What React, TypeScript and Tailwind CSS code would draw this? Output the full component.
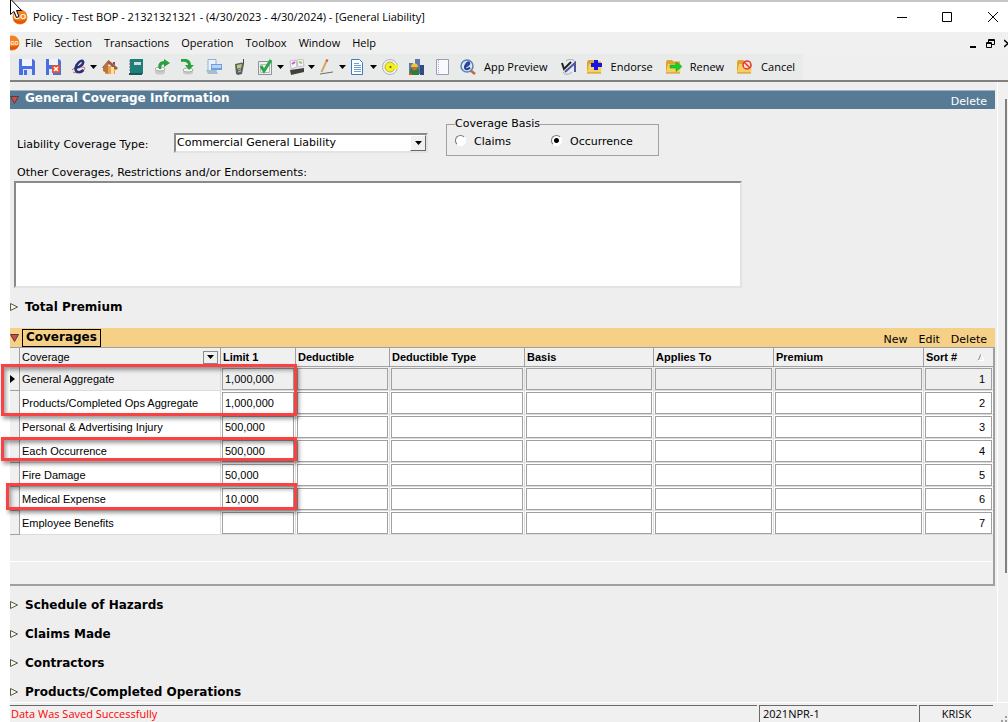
import React, { useState } from "react";

const menuItems = [
  "File",
  "Section",
  "Transactions",
  "Operation",
  "Toolbox",
  "Window",
  "Help",
];

const columns = [
  "Deductible",
  "Deductible Type",
  "Basis",
  "Applies To",
  "Premium",
];

const coverages = [
  { name: "General Aggregate", limit: "1,000,000" },
  { name: "Products/Completed Ops Aggregate", limit: "1,000,000" },
  { name: "Personal & Advertising Injury", limit: "500,000" },
  { name: "Each Occurrence", limit: "500,000" },
  { name: "Fire Damage", limit: "50,000" },
  { name: "Medical Expense", limit: "10,000" },
  { name: "Employee Benefits", limit: "" },
];

const Icon = ({ children }: { children: React.ReactNode }) => (
  <svg
    width="16"
    height="16"
    viewBox="0 0 16 16"
    fill="none"
    className="shrink-0"
    aria-hidden="true"
  >
    {children}
  </svg>
);

const DownArrow = () => (
  <svg width="7" height="4" viewBox="0 0 7 4" aria-hidden="true">
    <path d="M0 0h7L3.500 4z" fill="#000" />
  </svg>
);

const GoLogo = ({ narrow }: { narrow?: boolean }) => (
  <svg
    width={narrow ? 10 : 16}
    height="16"
    viewBox={narrow ? "6 0 10 16" : "0 0 16 16"}
    className="shrink-0"
    aria-hidden="true"
  >
    <circle cx="8" cy="8" r="7.500" fill="#f5821f" />
    <path d="M1 10a7.500 7.500 0 0 0 14 0c-4 2-10 2-14 0z" fill="#e2560b" />
    <text
      x={narrow ? 10.5 : 8}
      y="10"
      fontSize={narrow ? 5 : 8}
      fontWeight="bold"
      textAnchor="middle"
      fill="#fff"
      fontFamily="Liberation Sans, sans-serif"
    >
      GO
    </text>
  </svg>
);

const Folder = () => (
  <>
    <path d="M0 3 1 1h5l1.500 1.500H14V13H0z" fill="#dfa32f" />
    <path d="M2 5h13l-1 9H0z" fill="#f8cf63" />
    <path d="M0 14h14" stroke="#c98f1e" />
  </>
);

const icons = {
  save: (
    <>
      <path d="M0 0h14l2 2v14H0z" fill="#4a6fe0" />
      <path d="M3 0h10v7H3z" fill="#eef3ff" />
      <path d="M4 10h9v6H4z" fill="#dfe6f7" />
      <path d="M5 11h3v5H5z" fill="#4a6fe0" />
    </>
  ),
  saveClose: (
    <>
      <path d="M1 0h13l2 2v14H1z" fill="#4a6fe0" />
      <path d="M4 0h9v6H4z" fill="#eef3ff" />
      <path d="M4 10h4v6H4z" fill="#dfe6f7" />
      <path d="M7 6h8v8H7z" fill="#e0542f" />
      <path d="m9 8 4 4m0-4-4 4" stroke="#fff" strokeWidth="1.500" />
    </>
  ),
  script: (
    <>
      <path d="M1 11c2-3 12-4 13-2-1 4-9 6-12 4" stroke="#e05a5a" />
      <path
        d="M4 8.500c4 1 9-3.500 8-6C10.500-.500 4 6 4.500 10c.500 4 5 4 8 1"
        stroke="#28307c"
        strokeWidth="2.500"
      />
    </>
  ),
  home: (
    <>
      <path d="M3 7h10v8H3z" fill="#e8a25a" />
      <path d="M0 8.500 6.500 1l9.500 8-2 2-7-6-4 5z" fill="#9a5a46" />
      <path d="M1 8 6 2v13l-5-3z" fill="#b8743f" />
      <path d="M9 8h3v7H9z" fill="#ffe08a" />
      <path d="M11 3h2v3l-2-1z" fill="#7d5148" />
    </>
  ),
  book: (
    <>
      <path d="M2 0h13v15H2z" fill="#1f7f78" />
      <path d="M1 14h13v2H1z" fill="#165b57" />
      <path d="M6 3h7v3H6z" fill="#c9e2df" />
      <path d="M1 2h2M1 5h2M1 8h2M1 11h2" stroke="#5b6e6c" />
    </>
  ),
  checkOut: (
    <>
      <path d="M1 10h10v4c-2 2-8 2-10 0z" fill="#c9cbcb" />
      <ellipse cx="6" cy="10" rx="5" ry="2" fill="#f8f8f8" stroke="#a8a8a8" />
      <path
        d="M5 10C3 5 6 2 10 2V0l6 4-6 4V5.500C7 5 7 8 7.500 10z"
        fill="#2aa23c"
      />
    </>
  ),
  checkIn: (
    <>
      <path d="M3 11h10v3c-2 2-8 2-10 0z" fill="#c9cbcb" />
      <ellipse cx="8" cy="11" rx="5" ry="2" fill="#f8f8f8" stroke="#a8a8a8" />
      <path d="M1 0c6-1 10 1 10 6h3l-5 5-4-5h3C8 4 6 2 1 3z" fill="#2aa23c" />
    </>
  ),
  print: (
    <>
      <path d="M2 .500h8v12H2z" fill="#eaf3fb" stroke="#8fb3d6" />
      <path d="M5 5h11v6H5z" fill="#6c9fe0" />
      <path d="M6 6h9v3H6z" fill="#b9d4f5" />
      <path d="M0 11h10l2 4H2z" fill="#a8bccf" />
    </>
  ),
  phone: (
    <>
      <path d="M11 0h1v5h-1z" fill="#444" />
      <path d="m3 5 7-1.500 2 1.500-2 10-4 1-2-1z" fill="#5c625f" />
      <path d="m5 6 5-1-1 4-4 .500z" fill="#b7cf7d" />
      <path d="m6 11 3-1m-3 3 3-1" stroke="#b3b9b6" />
    </>
  ),
  check: (
    <>
      <path d="M.500 2.500h13v13H.500z" fill="#f0f0f0" stroke="#8d9494" />
      <path d="M2.500 5.500h9v8h-9z" stroke="#b4baba" />
      <path d="m3 7 3 5 7-11" stroke="#28a745" strokeWidth="3" />
    </>
  ),
  stamp: (
    <>
      <path d="m1 2 6-1 1 7-6 2z" fill="#f8f3f8" stroke="#c2bcc6" />
      <path d="m8 1 6-1 1 7-6 1z" fill="#f8f3f8" stroke="#c2bcc6" />
      <path d="m3 5 3-2" stroke="#c65bc8" strokeWidth="2" />
      <path d="m10 3 3 1" stroke="#92cf55" strokeWidth="2" />
      <path d="m1 11 14-2v4L2 16z" fill="#40403e" />
    </>
  ),
  pencil: (
    <>
      <path d="M7 1 1.500 13" stroke="#d9a860" strokeWidth="2" />
      <path d="m6 1 2 1" stroke="#cf5a4a" strokeWidth="2" />
      <path d="m0 15 13-2" stroke="#6c6c6c" />
    </>
  ),
  document: (
    <>
      <path d="M.500.500h8l3 3v12H.500z" fill="#fff" stroke="#3d7cc4" />
      <path d="M3 4.500h5M3 6.500h7M3 8.500h7M3 10.500h7M3 12.500h7" stroke="#6a9fd8" />
    </>
  ),
  target: (
    <>
      <circle cx="8" cy="8" r="7.500" fill="#f4f4f4" stroke="#b0b0b0" />
      <circle cx="8" cy="8" r="5" fill="#f4ef1d" stroke="#b5b04a" />
      <path d="M8 6h8v4H8z" fill="#f4ef1d" />
      <circle cx="8.500" cy="8" r="1" fill="#55552a" />
    </>
  ),
  worker: (
    <>
      <path d="M7 0h5v15H7zM1 4h4v10H1z" fill="#6078a8" />
      <path d="M12 6h4v10h-4z" fill="#324b80" />
      <path d="M2 11c1-3 8-3 9 0v5H2z" fill="#2f7d3c" />
      <circle cx="6.500" cy="9" r="2.500" fill="#b9743c" />
      <path d="M3 8c0-5 7-5 7 0z" fill="#f3c52c" />
      <path d="M1 14h3v2H1z" fill="#d4502f" />
    </>
  ),
  notebook: (
    <>
      <path d="M2.500.500h12v15h-12z" fill="#fafafe" stroke="#9a9db8" />
      <path d="M4.500 1v14" stroke="#a4a9dc" strokeDasharray="1 1" />
    </>
  ),
  preview: (
    <>
      <path d="m10 11 5 4" stroke="#c8633a" strokeWidth="2.500" />
      <circle cx="7" cy="7" r="6" fill="#dce9f7" stroke="#5a83b5" strokeWidth="1.500" />
      <path
        d="M4 8c3 0 6-3 5-4.500C7.500 2.500 5 6 5 8.500s3 2 5 0"
        stroke="#2a3f96"
        strokeWidth="2"
      />
    </>
  ),
  compare: (
    <>
      <path d="M5 2c3-3 9-2 9 2M2 13c1 3 6 3 9 0" stroke="#a0a4b8" />
      <path d="m1 4 2 6 7-7" stroke="#222" strokeWidth="2" />
      <path d="m4 13 10-9v9" stroke="#4c55a4" strokeWidth="2" />
    </>
  ),
  endorse: (
    <>
      <Folder />
      <path d="M7 1h4v3h4v4h-4v3H7V8H4V4h3z" fill="#1414e6" />
    </>
  ),
  renew: (
    <>
      <Folder />
      <path d="M4 6h6V3l6 4.500-6 5V9H4z" fill="#12d422" stroke="#1a8c22" strokeWidth=".5" />
    </>
  ),
  cancel: (
    <>
      <Folder />
      <circle cx="10" cy="6" r="4" fill="#fbe3d4" stroke="#e8352b" strokeWidth="1.500" />
      <path d="m7 3 6 6" stroke="#e8352b" strokeWidth="1.500" />
    </>
  ),
};

type Tool = {
  icon: keyof typeof icons;
  label: string;
  menu?: boolean;
  text?: boolean;
};

const tools: Tool[] = [
  { icon: "save", label: "Save" },
  { icon: "saveClose", label: "Save and close" },
  { icon: "script", label: "Forms", menu: true },
  { icon: "home", label: "Home" },
  { icon: "book", label: "Address book" },
  { icon: "checkOut", label: "Check out" },
  { icon: "checkIn", label: "Check in" },
  { icon: "print", label: "Print" },
  { icon: "phone", label: "Phone" },
  { icon: "check", label: "Tasks", menu: true },
  { icon: "stamp", label: "Cards", menu: true },
  { icon: "pencil", label: "Notes", menu: true },
  { icon: "document", label: "Documents", menu: true },
  { icon: "target", label: "Locate" },
  { icon: "worker", label: "Contractors" },
  { icon: "notebook", label: "Notebook" },
  { icon: "preview", label: "App Preview", text: true },
  { icon: "compare", label: "Compare" },
  { icon: "endorse", label: "Endorse", text: true },
  { icon: "renew", label: "Renew", text: true },
  { icon: "cancel", label: "Cancel", text: true },
];

const ToolButton = ({ tool }: { tool: Tool }) => (
  <button
    type="button"
    aria-label={tool.label}
    className={`flex h-full shrink-0 items-center pl-[5px] hover:bg-white ${
      tool.text ? "gap-2 pr-2" : tool.menu ? "gap-[3px]" : "pr-[5px]"
    }`}
  >
    <Icon>{icons[tool.icon]}</Icon>
    {tool.text && <span>{tool.label}</span>}
    {tool.menu && <DownArrow />}
  </button>
);

const TitleBar = () => (
  <header className="flex h-8 items-center border-t-2 border-[#c6c6ca] bg-white pl-0.5">
    <GoLogo />
    <h1 className="ml-[5px] flex-1 truncate">
      Policy - Test BOP - 21321321321 - (4/30/2023 - 4/30/2024) - [General
      Liability]
    </h1>
    <div className="flex h-full">
      <button type="button" aria-label="Minimize" className="w-[46px] pl-[18px]">
        <svg width="10" height="10" viewBox="0 0 10 10" stroke="#000">
          <path d="M0 5.500h10" />
        </svg>
      </button>
      <button type="button" aria-label="Maximize" className="w-[46px] pl-[17px]">
        <svg width="10" height="10" viewBox="0 0 10 10" fill="none" stroke="#000">
          <path d="M.500.500h9v9h-9z" />
        </svg>
      </button>
      <button type="button" aria-label="Close" className="w-[37px] pl-[17px]">
        <svg width="10" height="10" viewBox="0 0 10 10" stroke="#000">
          <path d="m0 0 10 10M10 0 0 10" />
        </svg>
      </button>
    </div>
  </header>
);

const MenuBar = () => (
  <nav className="flex h-[22px] items-center bg-[#f0f0f0]">
    <GoLogo narrow />
    <div className="flex flex-1 gap-3 pl-[5px]">
      {menuItems.map((item) => (
        <button key={item} type="button" className="hover:underline">
          {item}
        </button>
      ))}
    </div>
    <div className="flex gap-[9px]">
      <button type="button" aria-label="Minimize form">
        <svg width="7" height="9" viewBox="0 0 7 9">
          <path d="M0 7h6v2H0z" />
        </svg>
      </button>
      <button type="button" aria-label="Restore form">
        <svg width="9" height="9" viewBox="0 0 9 9" fill="none" stroke="#000">
          <path d="M2.500 3V.500h6v5H6M2 1.500h7" />
          <path d="M.500 3.500h5v5h-5zM0 4.500h6" />
        </svg>
      </button>
      <button type="button" aria-label="Close form">
        <svg width="4" height="9" viewBox="0 0 4 9" fill="none" stroke="#000">
          <path d="m0 1 4 3.500L0 8" strokeWidth="1.500" />
        </svg>
      </button>
    </div>
  </nav>
);

const OpenMark = () => (
  <svg width="9" height="8" viewBox="0 0 9 8" className="shrink-0">
    <path d="M.500.500h8L4.500 7.500z" fill="#d24a4a" stroke="#5a3a3a" />
  </svg>
);

const ClosedSection = ({ title }: { title: string }) => (
  <button type="button" className="flex h-5 w-full items-center gap-[7px]">
    <svg width="8" height="8" viewBox="0 0 8 8" className="shrink-0">
      <path d="M.500.500 7.500 4 .500 7.500z" fill="#fbf3df" stroke="#555" />
    </svg>
    <span className="text-[12px] font-bold">{title}</span>
  </button>
);

const GeneralInformation = () => {
  const [basis, setBasis] = useState("Occurrence");

  return (
    <section>
      <div className="flex h-[19px] items-center justify-between border-t border-[#9fb2c0] bg-[#587b95] pr-2 text-white">
        <button type="button" className="flex items-center gap-1.5">
          <OpenMark />
          <h2 className="pb-1 text-[12px] leading-4 font-bold">
            General Coverage Information
          </h2>
        </button>
        <button type="button" className="pt-1">
          Delete
        </button>
      </div>

      <div className="flex items-end pt-[7px] pl-[7px]">
        <label htmlFor="coverage-type" className="mb-[3px] w-[157px]">
          Liability Coverage Type:
        </label>
        <div className="relative mb-[3px] w-[254px]">
          <select
            id="coverage-type"
            className="h-5 w-full appearance-none rounded-none border-2 border-t-[#8a8a8a] border-r-[#e3e3e3] border-b-[#e3e3e3] border-l-[#8a8a8a] bg-white px-px outline-none"
          >
            <option>Commercial General Liability</option>
          </select>
          <span className="pointer-events-none absolute top-0.5 right-0.5 bottom-0.5 flex w-4 items-center justify-center border border-t-white border-r-[#696969] border-b-[#696969] border-l-white bg-[#f0f0f0]">
            <DownArrow />
          </span>
        </div>
        <fieldset className="ml-[18px] h-10 w-[213px] border border-[#a0a0a0] px-2">
          <legend className="leading-4">Coverage Basis</legend>
          <div className="flex pt-0.5">
            {["Claims", "Occurrence"].map((option) => (
              <label key={option} className="flex w-24 items-center gap-2">
                <input
                  type="radio"
                  name="basis"
                  checked={basis === option}
                  onChange={() => setBasis(option)}
                  className="mb-1 size-[11px] appearance-none rounded-full border border-t-[#777] border-r-white border-b-white border-l-[#777] bg-white checked:bg-[radial-gradient(circle,#000_2px,#fff_3px)]"
                />
                {option}
              </label>
            ))}
          </div>
        </fieldset>
      </div>

      <div className="mt-[9px] flex w-[732px] max-w-full flex-col pl-1">
        <label htmlFor="other-coverages" className="pl-[3px]">
          Other Coverages, Restrictions and/or Endorsements:
        </label>
        <textarea
          id="other-coverages"
          className="h-[107px] resize-none border-2 border-t-[#8a8a8a] border-r-[#e3e3e3] border-b-[#e3e3e3] border-l-[#8a8a8a] bg-white outline-none"
        />
      </div>
    </section>
  );
};

const cellInput =
  "block h-[22px] w-full border border-[#a0a0a0] bg-transparent px-0.5 outline-none";

const CoverageTable = () => (
  <table className="w-full table-fixed border-separate border-spacing-0 font-['Liberation_Sans',sans-serif] text-[11px]">
    <colgroup>
      <col className="w-[10px]" />
      <col className="w-[201px]" />
      <col className="w-[75px]" />
      <col className="w-[94px]" />
      <col className="w-[135px]" />
      <col className="w-[129px]" />
      <col className="w-[120px]" />
      <col className="w-[150px]" />
      <col className="w-[69px]" />
    </colgroup>
    <thead>
      <tr className="h-[19px] bg-[#f0f0f0] text-left">
        <th className="border-r border-b border-[#a0a0a0] p-0" />
        <th className="border-r border-b border-[#a0a0a0] p-0 pr-0.5 pl-0.5 font-normal">
          <div className="flex items-center justify-between">
            Coverage
            <button
              type="button"
              aria-label="Filter coverage"
              className="flex h-[13px] w-[15px] items-center justify-center border border-[#8a8a8a]"
            >
              <DownArrow />
            </button>
          </div>
        </th>
        <th className="border-r border-b border-[#a0a0a0] p-0 pl-0.5">
          Limit 1
        </th>
        {columns.map((column) => (
          <th
            key={column}
            className="border-r border-b border-[#a0a0a0] p-0 pl-0.5"
          >
            {column}
          </th>
        ))}
        <th className="border-b border-[#a0a0a0] p-0 pr-2 pl-0.5">
          <div className="flex items-center justify-between">
            Sort #
            <svg width="8" height="7" viewBox="0 0 8 7" fill="none">
              <path d="M4 0 1 7" stroke="#8a8a8a" />
              <path d="m4 0 3 6.500H1" stroke="#fff" />
            </svg>
          </div>
        </th>
      </tr>
    </thead>
    <tbody>
      {coverages.map((row, index) => (
        <tr
          key={row.name}
          className={`h-6 ${index === 0 ? "bg-[#efefef]" : "bg-white"}`}
        >
          <td className="border-r border-b border-[#a0a0a0] bg-[#f0f0f0] p-0">
            {index === 0 && (
              <svg width="5" height="8" viewBox="0 0 5 8">
                <path d="M0 0v8l5-4z" />
              </svg>
            )}
          </td>
          <td className="truncate border-r border-b border-[#dcdcdc] p-0 pl-0.5">
            {row.name}
          </td>
          <td className="border-r border-b border-[#dcdcdc] p-0 px-px">
            <input
              aria-label={`${row.name} limit`}
              defaultValue={row.limit}
              className={cellInput}
            />
          </td>
          {columns.map((column) => (
            <td
              key={column}
              className="border-r border-b border-[#dcdcdc] p-0 px-px"
            >
              <input
                aria-label={`${row.name} ${column}`}
                className={cellInput}
              />
            </td>
          ))}
          <td className="border-b border-[#dcdcdc] p-0 px-px">
            <input
              aria-label={`${row.name} sort`}
              defaultValue={index + 1}
              className="block h-[22px] w-full border border-[#a0a0a0] bg-transparent px-1.5 text-right outline-none"
            />
          </td>
        </tr>
      ))}
    </tbody>
  </table>
);

const Coverages = () => (
  <section>
    <div className="flex h-[19px] items-center justify-between bg-[#f7d087] pr-2">
      <button type="button" className="flex items-center gap-[3px]">
        <OpenMark />
        <h2 className="h-[18px] border border-black px-[3px] text-[12px] leading-[14px] font-bold">
          Coverages
        </h2>
      </button>
      <div className="flex gap-[11px] pt-1">
        <button type="button">New</button>
        <button type="button">Edit</button>
        <button type="button">Delete</button>
      </div>
    </div>
    <div className="relative border-t border-r-2 border-b-2 border-[#a0a0a0]">
      <CoverageTable />
      <div className="mt-[26px] h-[23px] border-t border-white bg-[#f0f0f0]" />
      {/* red call-outs round the required limits */}
      <div className="pointer-events-none absolute top-4 -left-[9px] h-[52px] w-[296px] border-[3px] border-[#fb4141] shadow-[2px_3px_4px_#0006,inset_2px_3px_4px_#0006]" />
      <div className="pointer-events-none absolute top-[89px] -left-[9px] h-6 w-[296px] border-[3px] border-[#fb4141] shadow-[2px_3px_4px_#0006,inset_2px_3px_4px_#0006]" />
      <div className="pointer-events-none absolute top-[135px] -left-1 h-[27px] w-[291px] border-[3px] border-[#fb4141] shadow-[2px_3px_4px_#0006,inset_2px_3px_4px_#0006]" />
    </div>
  </section>
);

const StatusBar = () => (
  <footer className="flex h-5 gap-0.5 border-t border-white bg-[#f0f0f0] pt-0.5 leading-4">
    <p className="flex-1 border-t border-[#696969] pl-px text-[#ff0000]">
      Data Was Saved Successfully
    </p>
    <p className="w-[158px] border-t border-l border-[#696969] pl-[3px]">
      2021NPR-1
    </p>
    <p className="w-[74px] border-t border-l border-[#696969] text-center">
      KRISK
    </p>
    <svg width="13" height="17" viewBox="0 0 13 17" fill="#a0a0a0">
      <path d="M10 11h2v2h-2zM6 15h2v2H6zM10 15h2v2h-2z" />
    </svg>
  </footer>
);

const App = () => {
  return (
    <div className="relative flex min-h-screen flex-col overflow-x-hidden bg-white pl-[10px] font-['Open_Sans',sans-serif] text-[11px] text-black">
      <TitleBar />
      <MenuBar />
      <div className="flex h-7 border-b-2 border-[#808080] bg-[#efefef]">
        <div className="flex h-full bg-[#e8ebea] pl-1 whitespace-nowrap">
          {tools.map((tool) => (
            <ToolButton key={tool.icon} tool={tool} />
          ))}
        </div>
      </div>

      <div className="flex flex-1 bg-[#eeeeee]">
        <main className="min-w-0 flex-1 pt-2 pr-0.5 font-['DejaVu_Sans',sans-serif] leading-4">
          <GeneralInformation />
          <div className="pt-[9px] pb-[11px]">
            <ClosedSection title="Total Premium" />
          </div>
          <Coverages />
          <div className="flex flex-col gap-[9px] pt-[9px]">
            <ClosedSection title="Schedule of Hazards" />
            <ClosedSection title="Claims Made" />
            <ClosedSection title="Contractors" />
            <ClosedSection title="Products/Completed Operations" />
          </div>
        </main>
        <div className="flex w-[11px] justify-end border-l border-white bg-[#f0f0f0] pt-[17px] pr-px">
          <div className="h-[474px] w-0.5 bg-[#808080]" />
        </div>
      </div>

      <StatusBar />

      <svg
        width="14"
        height="20"
        viewBox="0 0 14 20"
        className="pointer-events-none absolute top-0 left-[10px]"
        aria-hidden="true"
      >
        <path
          d="M.500-1v15.500L4 11.500l2.500 6 2.500-1-2.500-6h5z"
          fill="#fff"
          stroke="#000"
        />
      </svg>
    </div>
  );
};

export default App;
